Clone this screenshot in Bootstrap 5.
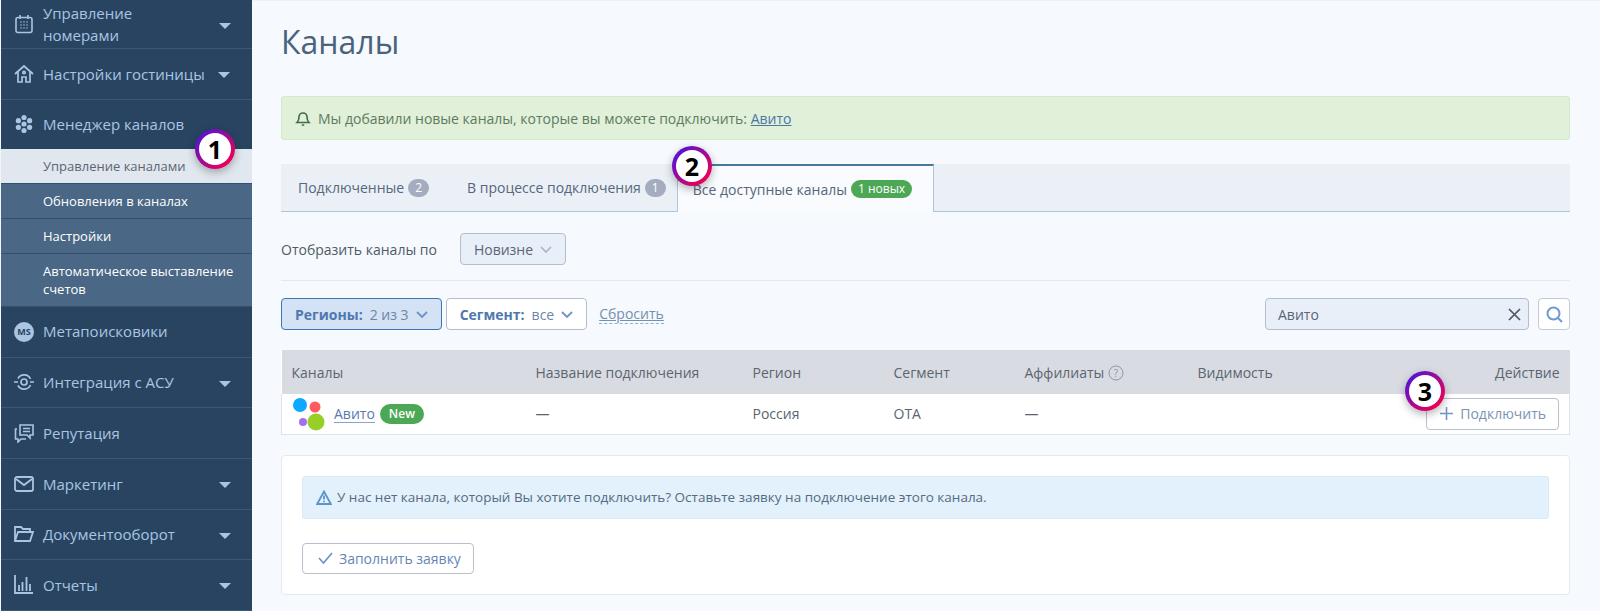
<!DOCTYPE html>
<html lang="ru"><head><meta charset="utf-8"><title>Каналы</title>
<link href="https://cdn.jsdelivr.net/npm/bootstrap@5.3.0/dist/css/bootstrap.min.css" rel="stylesheet">
<style>
html,body{height:611px;overflow:hidden}
body{font-family:"Open Sans","Noto Sans",sans-serif;font-size:14px;background:#f6f9fd;color:#4f5b67}
.shell{height:611px;display:flex}
.side{width:252px;flex:none;background:#294461;border-left:1px solid #f3f6f9;overflow:hidden}
.side-item{height:50.5px;display:flex;align-items:center;padding-left:13px;color:#a9c5e2;font-size:15px;border-bottom:1px solid #3c5876;text-decoration:none}
.side-item svg{width:20px;height:20px;flex:none;margin-right:9px}
.side-item.first{height:49px}
.side-item.open{border-bottom:0}
.caret-d{width:0;height:0;border:6px solid transparent;border-top:6px solid #a9c5e2;border-bottom:0;margin-left:auto;margin-right:21px;margin-top:3px}
.caret-d.near{margin-left:9px}
.side-sub{display:block;padding:8px 14px 8px 42px;font-size:13px;line-height:18px;color:#fff;background:#4a6785;border-bottom:1px solid #35506e;font-weight:500;text-decoration:none}
.side-sub.on{background:#e0e7ee;color:#5c6671;font-weight:400;height:35px}
.pane{flex:1;min-width:0;padding:0 30px 0 29px;border-top:1px solid #eef1f5}
.page-title{font-size:32px;font-weight:400;color:#4a637c;margin:19px 0 32px;line-height:44px}
.note-ok{background:#e0f0d9;border:1px solid #d4e8cb;border-radius:3px;height:44px;padding:0 13px;display:flex;align-items:center;gap:7px;color:#5f7a5f;font-size:14px}
.note-ok a{color:#4a76a8}
.tabs-bar{display:flex;height:48px;background:#ebf0f7;border-bottom:1px solid #afc6da;margin-top:24px;align-items:stretch}
.tab-it{display:flex;align-items:center;padding:0 17px;color:#55677a;gap:4px}
.tab-it.now{background:#f9fbfe;border:1px solid #afc6da;border-top:2px solid #47789b;border-bottom:0;margin-bottom:-1px;margin-left:5px;padding:0 21px 0 15px;gap:4px}
.tab-it.sec{padding:0 6px 0 21px}
.count{background:#a3adbf;color:#fff;border-radius:10px;font-size:12px;padding:0 7px;line-height:18px}
.count.fresh{background:#4ca854;padding:0 7px}
.sort-row{display:flex;align-items:center;gap:23px;padding:21px 0 15px;border-bottom:1px solid #e4e9ee;height:69px}
.sel-soft{height:32px;background:#e9eff9;border:1px solid #b4bdcc;border-radius:4px;padding:0 13px;color:#5a6675;display:flex;align-items:center;gap:7px}
.filt-row{display:flex;align-items:center;gap:4px;margin-top:17px;height:32px}
.filt{height:32px;background:#fff;border:1px solid #b4bdcc;border-radius:4px;padding:0 13px;color:#6f85a5;display:flex;align-items:center;gap:7px}
.filt b{color:#4e78ae;font-weight:700}
.filt.act{background:#d3e2f5;border-color:#3f74b5}
.reset{color:#7490b0;border-bottom:1px dashed #8fb0d0;margin-left:8px;line-height:19px}
.srch{margin-left:auto;width:264px;height:32px;background:#e9eff9;border:1px solid #b4bdcc;border-radius:4px;display:flex;align-items:center;padding:0 7px 0 12px;justify-content:space-between;color:#5a6675}
.srch-btn{width:32px;height:32px;border:1px solid #c2cbd8;border-radius:4px;background:#fff;display:flex;align-items:center;justify-content:center;margin-left:5px}
.chan-table{width:100%;margin-top:20px;background:#fff;table-layout:fixed;border-collapse:collapse}
.chan-table th{background:#d8dce2;font-weight:400;color:#5b6570;height:44px;padding:0 10px;white-space:nowrap}
.chan-table td{height:40px;padding:0 10px;border-bottom:1px solid #dfe3e8;color:#5b6570}
.chan-table td:first-child{border-left:1px solid #dfe3e8}
.chan-table td:last-child{border-right:1px solid #dfe3e8}
.avito{color:#5b79b0;text-decoration:none;border-bottom:1px solid #8ba4c8;line-height:17px}
.new-pill{background:#4ca854;color:#fff;border-radius:10px;font-size:12px;padding:0 9px;line-height:20px;font-weight:600}
.btn-conn{height:32px;background:#fff;border:1px solid #b9c0cb;border-radius:4px;color:#7c93b2;padding:0 12px 0 13px;display:inline-flex;align-items:center;gap:7px;vertical-align:middle}
.req-card{background:#fff;border:1px solid #e6eaef;border-radius:4px;margin-top:20px;height:140px;padding:20px}
.note-info{background:#e2f1fc;border:1px solid #d8ebf8;border-radius:3px;height:43px;display:flex;align-items:center;padding:0 13px;gap:5px;color:#566b80;font-size:13.5px}
.btn-fill{height:31px;margin-top:24px;background:#fff;border:1px solid #b9c0cb;border-radius:4px;color:#6585b5;padding:0 12px 0 15px;display:inline-flex;align-items:center;gap:6px}
.step{position:absolute;width:40px;height:40px;border-radius:50%;background:linear-gradient(135deg,#5a12d0 15%,#f5004f 90%);padding:4px;box-shadow:0 3px 8px rgba(0,0,0,.3)}
.step span{display:flex;width:100%;height:100%;border-radius:50%;background:#fff;color:#000;font:700 25px/1 "Open Sans",sans-serif;align-items:center;justify-content:center}
.step1{left:195px;top:129px}.step2{left:672px;top:146px}.step3{left:1405px;top:371px}
.logo-chan{width:34px;height:34px;flex:none}
</style></head><body>
<div class="shell position-relative">
<nav class="side">
<a class="side-item first"><svg viewBox="0 0 20 20" fill="none" stroke="#a9c5e2" stroke-width="1.6"><rect x="2" y="3.5" width="16" height="15" rx="2"/><path d="M6 1v4M14 1v4"/><path d="M6.5 8h1M9.5 8h1M12.5 8h1M6.5 11h1M9.5 11h1M12.5 11h1M6.5 14h1M9.5 14h1M12.5 14h1" stroke-width="1.4"/></svg>Управление номерами<i class="caret-d near"></i></a>
<a class="side-item"><svg viewBox="0 0 20 20" fill="none" stroke="#a9c5e2" stroke-width="1.7"><path d="M1 10 10 2l9 8M4 8v10h4v-5h4v5h4V8"/><circle cx="10" cy="8.5" r="1.2"/></svg>Настройки гостиницы<i class="caret-d near" style="margin-left:13px"></i></a>
<a class="side-item open" style="height:49px"><svg viewBox="0 0 20 20" fill="#a9c5e2"><circle cx="10" cy="3.5" r="2.6"/><circle cx="10" cy="16.5" r="2.6"/><circle cx="4.4" cy="6.7" r="2.6"/><circle cx="15.6" cy="6.7" r="2.6"/><circle cx="4.4" cy="13.3" r="2.6"/><circle cx="15.6" cy="13.3" r="2.6"/><circle cx="10" cy="10" r="2.6"/></svg>Менеджер каналов</a>
<a class="side-sub on">Управление каналами</a>
<a class="side-sub">Обновления в каналах</a>
<a class="side-sub">Настройки</a>
<a class="side-sub">Автоматическое выставление счетов</a>
<a class="side-item" style="height:51px"><svg viewBox="0 0 20 20"><circle cx="10" cy="10" r="10" fill="#a9c5e2"/><text x="10" y="13.4" text-anchor="middle" font-size="9" font-weight="700" fill="#294461" font-family="Open Sans">MS</text></svg>Метапоисковики</a>
<a class="side-item"><svg viewBox="0 0 20 20" fill="none" stroke="#a9c5e2" stroke-width="1.7"><path d="M0 10h4M16 10h4M4 6.5A7 7 0 0 1 16.5 7M4 13.5A7 7 0 0 0 16.5 13"/><circle cx="10" cy="10" r="3"/></svg>Интеграция с АСУ<i class="caret-d"></i></a>
<a class="side-item" style="height:51px"><svg viewBox="0 0 20 20" fill="none" stroke="#a9c5e2" stroke-width="1.6"><path d="M6 2h13v10h-3v3l-3-3H6zM9 5.5h7M9 8.5h7"/><path d="M3 6H1.5v10H4v3l3-3h5"/></svg>Репутация</a>
<a class="side-item"><svg viewBox="0 0 20 20" fill="none" stroke="#a9c5e2" stroke-width="1.8"><rect x="1" y="3" width="18" height="14" rx="2"/><path d="m2 5 8 6 8-6"/></svg>Маркетинг<i class="caret-d"></i></a>
<a class="side-item"><svg viewBox="0 0 20 20" fill="none" stroke="#a9c5e2" stroke-width="1.8"><path d="M1 17V3h6l2 2h7v3M1 17h15l3-9H4z"/></svg>Документооборот<i class="caret-d"></i></a>
<a class="side-item"><svg viewBox="0 0 20 20" fill="none" stroke="#a9c5e2" stroke-width="1.8"><path d="M1 0v18h18M5 16v-6M8.5 16V7M12.500 16V2M16 16V9"/></svg>Отчеты<i class="caret-d"></i></a>
</nav>
<main class="pane">
<h1 class="page-title">Каналы</h1>
<div class="note-ok"><svg width="16" height="16" viewBox="0 0 16 16" fill="none" stroke="#3f6b45" stroke-width="1.6"><path d="M2 12.500h12c-1.500-1.500-2-2.500-2-5.500a4 4 0 0 0-8 0c0 3-.5 4-2 5.500zM6.800 15h2.400"/></svg><span>Мы добавили новые каналы, которые вы можете подключить: <a href="#">Авито</a></span></div>
<div class="tabs-bar">
<div class="tab-it">Подключенные <span class="count">2</span></div>
<div class="tab-it sec">В процессе подключения <span class="count">1</span></div>
<div class="tab-it now">Все доступные каналы <span class="count fresh">1 новых</span></div>
</div>
<div class="sort-row"><span>Отобразить каналы по</span><div class="sel-soft">Новизне <svg width="12" height="7" viewBox="0 0 12 7" fill="none" stroke="#a9b4c4" stroke-width="1.6"><path d="m1 1 5 5 5-5"/></svg></div></div>
<div class="filt-row">
<div class="filt act"><b>Регионы:</b> 2 из 3 <svg width="12" height="7" viewBox="0 0 12 7" fill="none" stroke="#6f93c4" stroke-width="1.8"><path d="m1 1 5 5 5-5"/></svg></div>
<div class="filt"><b>Сегмент:</b> все <svg width="12" height="7" viewBox="0 0 12 7" fill="none" stroke="#6f93c4" stroke-width="1.8"><path d="m1 1 5 5 5-5"/></svg></div>
<a class="reset">Сбросить</a>
<div class="srch">Авито <svg width="13" height="13" viewBox="0 0 13 13" stroke="#4a5868" stroke-width="1.700"><path d="m1 1 11 11M12 1 1 12"/></svg></div>
<div class="srch-btn"><svg width="17" height="17" viewBox="0 0 17 17" fill="none" stroke="#6f9ad0" stroke-width="2"><circle cx="7.500" cy="7.500" r="6"/><path d="m12 12 4 4"/></svg></div>
</div>
<table class="chan-table">
<colgroup><col style="width:244px"><col style="width:217px"><col style="width:141px"><col style="width:131px"><col style="width:173px"><col style="width:176px"><col></colgroup>
<thead><tr><th>Каналы</th><th>Название подключения</th><th>Регион</th><th>Сегмент</th><th>Аффилиаты <svg width="16" height="16" viewBox="0 0 16 16" fill="none" stroke="#8b95a2" style="vertical-align:-3px"><circle cx="8" cy="8" r="7"/><text x="8" y="11.500" text-anchor="middle" font-size="10" fill="#8b95a2" stroke="none" font-family="Open Sans">?</text></svg></th><th>Видимость</th><th class="text-end">Действие</th></tr></thead>
<tbody><tr>
<td><div class="d-flex align-items-center gap-2"><svg class="logo-chan" viewBox="0 0 34 34"><circle cx="8" cy="8" r="7" fill="#0ba9ff"/><circle cx="23" cy="10" r="5.500" fill="#ff5a5f"/><circle cx="11" cy="25" r="4" fill="#a66ef0"/><circle cx="24" cy="25" r="8.500" fill="#97cf26"/></svg><a class="avito" href="#">Авито</a><span class="new-pill" style="margin-left:-3px">New</span></div></td>
<td>—</td><td>Россия</td><td>OTA</td><td>—</td><td></td>
<td class="text-end"><span class="btn-conn"><svg width="13" height="13" viewBox="0 0 13 13" stroke="#6e97cc" stroke-width="1.600"><path d="M6.500 0v13M0 6.500h13"/></svg>Подключить</span></td>
</tr></tbody></table>
<div class="req-card">
<div class="note-info"><svg width="16" height="15" viewBox="0 0 16 15" fill="none" stroke="#5c93c8" stroke-width="1.800"><path d="M8 1.500 1.200 14h13.600zM8 5.500v4M8 10.800v1.400"/></svg><span>У нас нет канала, который Вы хотите подключить? Оставьте заявку на подключение этого канала.</span></div>
<span class="btn-fill"><svg width="15" height="12" viewBox="0 0 15 12" fill="none" stroke="#6a94c9" stroke-width="1.700"><path d="m1 6 4.500 5L14 1"/></svg>Заполнить заявку</span>
</div>
</main>
<div class="step step1"><span>1</span></div>
<div class="step step2"><span>2</span></div>
<div class="step step3"><span>3</span></div>
</div>
<script src="https://cdn.jsdelivr.net/npm/bootstrap@5.3.0/dist/js/bootstrap.bundle.min.js"></script>
</body></html>
